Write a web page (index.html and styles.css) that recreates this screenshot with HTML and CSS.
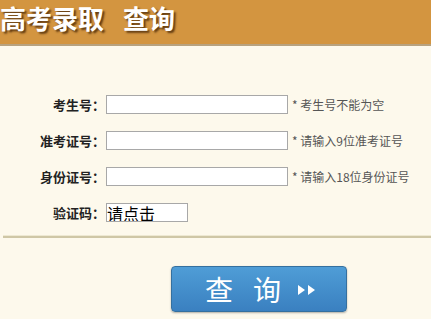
FILE: index.html
```html
<html>
	<head>
        <title>高考录取查询</title>
        <meta charset="utf-8">
    	<link rel="stylesheet" href="styles.css">
	</head>
	<body>
        <div class="header">
            <h1>高考录取<span class="gap">查询</span></h1>
        </div>
        <div class="form">
            <div class="row">
                <label>考生号：</label>
                <input type="text" class="field">
                <span class="tip">* 考生号不能为空</span>
            </div>
            <div class="row">
                <label>准考证号：</label>
                <input type="text" class="field">
                <span class="tip">* 请输入9位准考证号</span>
            </div>
            <div class="row">
                <label>身份证号：</label>
                <input type="text" class="field">
                <span class="tip">* 请输入18位身份证号</span>
            </div>
            <div class="row">
                <label>验证码：</label>
                <input type="text" class="field code" value="请点击">
            </div>
        </div>
        <div class="line"></div>
        <div class="submit">
            <button id="btn">
                <span>查</span>
                <span class="second">询</span>
                <svg class="arrow" width="18" height="10" viewBox="0 0 18 10">
                    <polygon points="0,0 7,5 0,10" fill="#FFF"/>
                    <polygon points="10,0 17,5 10,10" fill="#FFF"/>
                </svg>
            </button>
        </div>
	</body>
</html>
```

FILE: styles.css
```css
        html, body {
            margin: 0;
            background: #FDF9EC;
            font-family: "Microsoft YaHei", "Noto Sans CJK SC", sans-serif;
            overflow: hidden;
        }
        .header {
            height: 44px;
            background: #D39540;
            border-bottom: 2px solid #B8A27E;
        }
        .header h1 {
            margin: 0;
            padding-top: 1px;
            font-size: 26px;
            line-height: 34px;
            color: #FFF;
            font-weight: bold;
            letter-spacing: 0;
            text-shadow: 2px 2px 2px rgba(60,30,0,0.75);
        }
        .gap {
            margin-left: 19px;
        }
        .form {
            padding-top: 49px;
        }
        .row {
            display: flex;
            align-items: center;
            height: 19px;
            margin-bottom: 17px;
        }
        .row label {
            width: 105px;
            text-align: right;
            font-size: 13px;
            font-weight: bold;
            color: #222;
            margin-right: 1px;
        }
        .field {
            box-sizing: border-box;
            width: 182px;
            height: 19px;
            border: 1px solid #A8A8A8;
            background: #FFF;
            outline: none;
            padding: 0 2px;
        }
        .code {
            width: 82px;
            font-size: 16px;
            font-family: "Noto Sans CJK SC", sans-serif;
            color: #000;
            padding: 0;
        }
        .tip {
            margin-left: 4px;
            font-size: 12px;
            color: #555;
        }
        .line {
            margin: -4px 0 0 3px;
            height: 2px;
            background: #CFC7A6;
            border-top: 1px solid #EEE9D2;
        }
        .submit {
            padding-top: 28px;
            padding-left: 171px;
        }
        button {
            box-sizing: border-box;
            display: flex;
            align-items: center;
            width: 176px;
            height: 46px;
            border: 1px solid #35709F;
            border-radius: 4px;
            background: linear-gradient(#4F9DD6, #3A80C0);
            color: #FFF;
            font-family: "Noto Sans CJK SC", sans-serif;
            font-size: 28px;
            padding: 0 0 0 33px;
            box-shadow: 0 1px 2px rgba(0,0,0,0.3);
            outline: none;
        }
        .second {
            margin-left: 20px;
        }
        .arrow {
            margin-left: 17px;
            margin-top: 2px;
        }
```
